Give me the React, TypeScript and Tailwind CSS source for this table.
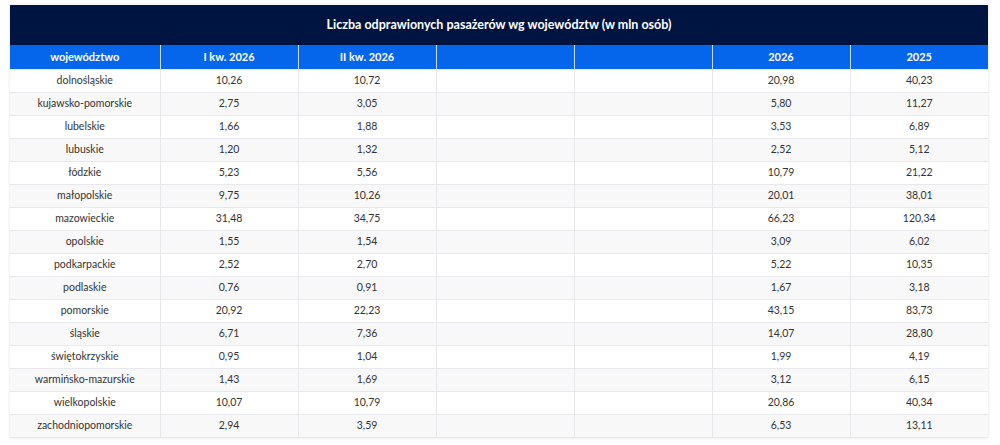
const rows: [string, string, string, string, string][] = [
  ['dolnośląskie', '10,26', '10,72', '20,98', '40,23'],
  ['kujawsko-pomorskie', '2,75', '3,05', '5,80', '11,27'],
  ['lubelskie', '1,66', '1,88', '3,53', '6,89'],
  ['lubuskie', '1,20', '1,32', '2,52', '5,12'],
  ['łódzkie', '5,23', '5,56', '10,79', '21,22'],
  ['małopolskie', '9,75', '10,26', '20,01', '38,01'],
  ['mazowieckie', '31,48', '34,75', '66,23', '120,34'],
  ['opolskie', '1,55', '1,54', '3,09', '6,02'],
  ['podkarpackie', '2,52', '2,70', '5,22', '10,35'],
  ['podlaskie', '0,76', '0,91', '1,67', '3,18'],
  ['pomorskie', '20,92', '22,23', '43,15', '83,73'],
  ['śląskie', '6,71', '7,36', '14,07', '28,80'],
  ['świętokrzyskie', '0,95', '1,04', '1,99', '4,19'],
  ['warmińsko-mazurskie', '1,43', '1,69', '3,12', '6,15'],
  ['wielkopolskie', '10,07', '10,79', '20,86', '40,34'],
  ['zachodniopomorskie', '2,94', '3,59', '6,53', '13,11'],
];

const headers = ['województwo', 'I kw. 2026', 'II kw. 2026', '', '', '2026', '2025'];

export default function App() {
  return (
    <div className="min-h-screen bg-white pl-[10px] pt-[5px] font-['Lato','Liberation_Sans',sans-serif]">
      <div className="w-[978px] shadow-[0_0_3px_rgba(0,0,0,0.12)]">
        {/* Title */}
        <div className="flex h-[40px] items-center justify-center bg-[#001442] text-[12.5px] font-bold text-white">
          Liczba odprawionych pasażerów wg województw (w mln osób)
        </div>

        <table className="w-full table-fixed border-collapse text-center">
          <colgroup>
            <col className="w-[150px]" />
            <col className="w-[138px]" />
            <col className="w-[138px]" />
            <col className="w-[138px]" />
            <col className="w-[138px]" />
            <col className="w-[138px]" />
            <col className="w-[138px]" />
          </colgroup>
          <thead>
            <tr className="h-[24px] bg-[#0565eb]">
              {headers.map((h, i) => (
                <th
                  key={i}
                  className="border-x border-x-[#c9dcf7] p-0 text-[11px] font-bold text-white first:border-l-0 last:border-r-0"
                >
                  {h}
                </th>
              ))}
            </tr>
          </thead>
          <tbody>
            {rows.map((r, i) => (
              <tr key={r[0]} className={`h-[23px] ${i % 2 ? 'bg-[#f8f8f8]' : 'bg-white'}`}>
                {[r[0], r[1], r[2], '', '', r[3], r[4]].map((v, j) => (
                  <td
                    key={j}
                    className="border border-[#e8e8ec] p-0 text-[10.5px] text-[#333333] first:border-l-0 last:border-r-0"
                  >
                    {v}
                  </td>
                ))}
              </tr>
            ))}
          </tbody>
        </table>
      </div>
    </div>
  );
}
